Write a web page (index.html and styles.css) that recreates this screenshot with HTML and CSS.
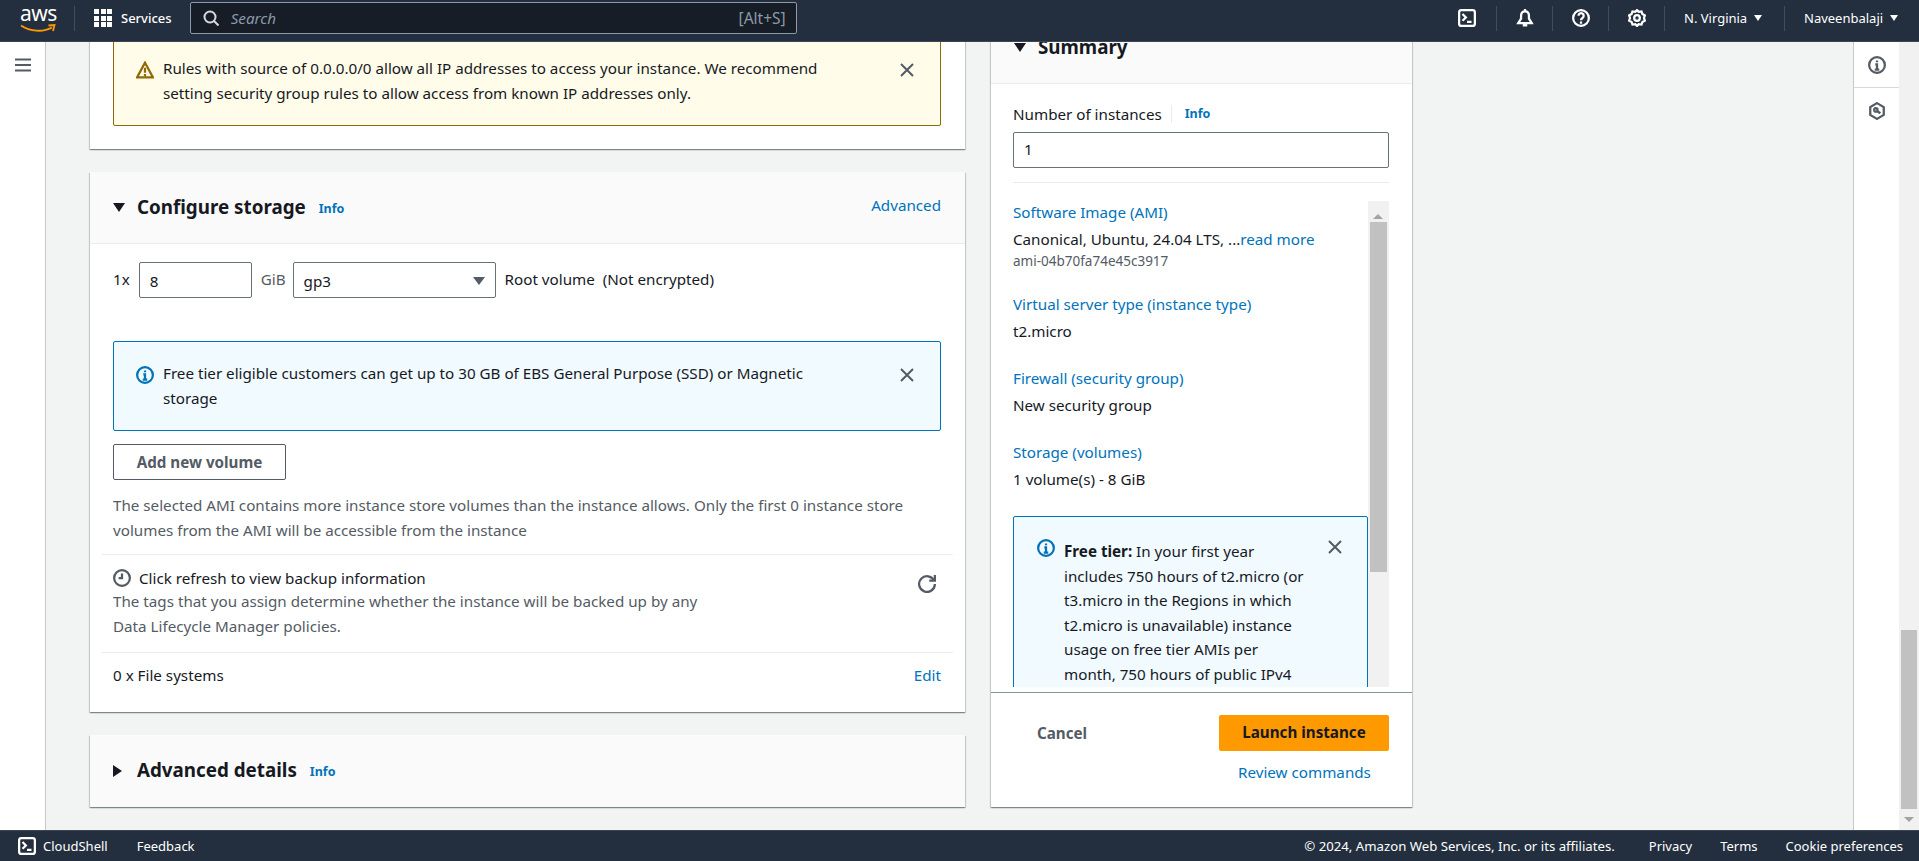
FILE: index.html
```html
<!DOCTYPE html>
<html lang="en">
<head>
  <meta charset="UTF-8" />
  <meta name="viewport" content="width=device-width, initial-scale=1.0"/>
  <title>Launch an instance | EC2</title>
  <link rel="stylesheet" href="styles.css">
</head>
<body>

  <header class="topnav">
    <a class="logo">
      <span class="logo-text">aws</span>
      <svg class="logo-smile" viewBox="0 0 36 9"><path d="M1 1.500c9 6 22 7 31 2" fill="none" stroke="#f90" stroke-width="2"/><path d="M28.500 1.500 34.500 1 33 7" fill="none" stroke="#f90" stroke-width="1.800"/></svg>
    </a>
    <span class="nav-sep nav-sep-logo"></span>
    <a class="services">
      <span class="grid-icon"><i></i><i></i><i></i><i></i><i></i><i></i><i></i><i></i><i></i></span>
      Services
    </a>
    <div class="search">
      <svg class="icon" viewBox="0 0 16 16"><circle cx="7" cy="7" r="5.500"/><path d="m11 11 4.500 4.500"/></svg>
      <span class="search-text">Search</span>
      <span class="search-key">[Alt+S]</span>
    </div>
    <div class="nav-right">
      <span class="nav-item"><svg class="icon" viewBox="0 0 16 16"><rect x="1" y="1" width="14" height="14" rx="2"/><path d="m4 4.500 3 3-3 3M8 11.500h4"/></svg></span>
      <span class="nav-item"><svg class="icon" viewBox="0 0 16 16"><path d="M8 0v2M8 2c-2.500 0-3.500 2-3.500 4v2.500L2 12.500h12l-2.500-4V6c0-2-1-4-3.500-4ZM6 14.500h4"/></svg></span>
      <span class="nav-item"><svg class="icon" viewBox="0 0 16 16"><circle cx="8" cy="8" r="7"/><path d="M5.800 6a2.300 2.300 0 1 1 3.500 2c-.9.600-1.300 1-1.300 2M8 11v2"/></svg></span>
      <span class="nav-item"><svg class="icon" viewBox="0 0 16 16"><path d="m8 1 1.500 1.500 2.500-.3.800 2.300 2.200 1.200-.8 2.300.8 2.300-2.200 1.200-.8 2.300-2.500-.3L8 15l-1.500-1.500-2.500.3-.8-2.300-2.200-1.200L1.800 8 1 5.700l2.200-1.200.8-2.300 2.500.3L8 1Z"/><circle cx="8" cy="8" r="2.500"/></svg></span>
      <span class="nav-item nav-menu nav-region">N. Virginia <b class="caret"></b></span>
      <span class="nav-item nav-menu nav-user">Naveenbalaji <b class="caret"></b></span>
    </div>
  </header>

  <div class="middle">
    <aside class="sidenav">
      <svg class="icon" viewBox="0 0 16 16"><path d="M0 2.500h16M0 8h16M0 13.500h16"/></svg>
    </aside>

    <main class="content">
      <div class="col-form">
        <section class="card card-rules">
          <div class="alert alert-warning">
            <svg class="icon alert-icon" viewBox="0 0 16 16"><path d="m8 1.500 7 13H1l7-13Z"/><path d="M8 6v4.500M8 11.500V13.500"/></svg>
            <p class="alert-text">Rules with source of 0.0.0.0/0 allow all IP addresses to access your instance. We recommend<br>setting security group rules to allow access from known IP addresses only.</p>
            <svg class="icon alert-close" viewBox="0 0 16 16"><path d="m2 2 12 12M14 2 2 14"/></svg>
          </div>
        </section>

        <section class="card">
          <div class="card-head">
            <b class="tri-down"></b>
            <h2>Configure storage</h2>
            <a class="info">Info</a>
            <a class="link head-action">Advanced</a>
          </div>
          <div class="storage-body">
            <div class="volume-row">
              <span>1x</span>
              <div class="field field-size">8</div>
              <span class="unit">GiB</span>
              <div class="field field-type">gp3<b class="select-caret"></b></div>
              <span class="root">Root volume&nbsp; (Not encrypted)</span>
            </div>
            <div class="alert alert-info">
              <svg class="icon alert-icon" viewBox="0 0 16 16"><circle cx="8" cy="8" r="7"/><path d="M8 12V7.500H6.500M6 12h4M8 4v1.500"/></svg>
              <p class="alert-text">Free tier eligible customers can get up to 30 GB of EBS General Purpose (SSD) or Magnetic<br>storage</p>
              <svg class="icon alert-close" viewBox="0 0 16 16"><path d="m2 2 12 12M14 2 2 14"/></svg>
            </div>
            <button class="btn-normal">Add new volume</button>
            <p class="note">The selected AMI contains more instance store volumes than the instance allows. Only the first 0 instance store<br>volumes from the AMI will be accessible from the instance</p>
          </div>
          <div class="row row-backup">
            <div>
              <div class="backup-title">
                <svg class="icon clock" viewBox="0 0 16 16"><circle cx="8" cy="8" r="7"/><path d="M8 4v4H5"/></svg>
                Click refresh to view backup information
              </div>
              <p class="note">The tags that you assign determine whether the instance will be backed up by any<br>Data Lifecycle Manager policies.</p>
            </div>
            <svg class="icon refresh" viewBox="0 0 16 16"><path d="M10 5h5V0"/><path d="M15 8a7 7 0 1 1-.7-3"/></svg>
          </div>
          <div class="row row-files">
            <span>0 x File systems</span>
            <a class="link">Edit</a>
          </div>
        </section>

        <section class="card card-closed">
          <div class="card-head card-head-closed">
            <b class="tri-right"></b>
            <h2>Advanced details</h2>
            <a class="info">Info</a>
          </div>
        </section>
      </div>

      <div class="col-summary">
        <section class="card">
          <div class="card-head summary-head">
            <b class="tri-down"></b>
            <h2>Summary</h2>
          </div>
          <div class="summary-top">
            <div class="count-label"><span>Number of instances</span><a class="info">Info</a></div>
            <div class="field field-count">1</div>
          </div>
          <div class="summary-scroll">
            <div class="summary-list">
              <div class="item item-first">
                <a class="link">Software Image (AMI)</a>
                <div class="value">Canonical, Ubuntu, 24.04 LTS, ...<a class="link">read more</a></div>
                <div class="ami">ami-04b70fa74e45c3917</div>
              </div>
              <div class="item">
                <a class="link">Virtual server type (instance type)</a>
                <div class="value">t2.micro</div>
              </div>
              <div class="item">
                <a class="link">Firewall (security group)</a>
                <div class="value">New security group</div>
              </div>
              <div class="item">
                <a class="link">Storage (volumes)</a>
                <div class="value">1 volume(s) - 8 GiB</div>
              </div>
              <div class="alert alert-info alert-tier">
                <svg class="icon alert-icon" viewBox="0 0 16 16"><circle cx="8" cy="8" r="7"/><path d="M8 12V7.500H6.500M6 12h4M8 4v1.500"/></svg>
                <p class="alert-text"><b>Free tier:</b> In your first year<br>includes 750 hours of t2.micro (or<br>t3.micro in the Regions in which<br>t2.micro is unavailable) instance<br>usage on free tier AMIs per<br>month, 750 hours of public IPv4</p>
                <svg class="icon alert-close" viewBox="0 0 16 16"><path d="m2 2 12 12M14 2 2 14"/></svg>
              </div>
            </div>
            <div class="sbar sbar-inner">
              <b class="sbar-up sbar-off"></b>
              <div class="thumb"></div>
              <div class="sbar-gap"></div>
              <b class="sbar-down"></b>
            </div>
          </div>
          <div class="summary-foot">
            <div class="foot-actions">
              <a class="cancel">Cancel</a>
              <button class="btn-primary">Launch instance</button>
            </div>
            <a class="link review">Review commands</a>
          </div>
        </section>
      </div>
    </main>

    <aside class="helpnav">
      <div class="help-tool">
        <svg class="icon" viewBox="0 0 16 16"><circle cx="8" cy="8" r="7"/><path d="M8 12V7.500H6.500M6 12h4M8 4v1.500"/></svg>
      </div>
      <div class="help-tool">
        <svg class="icon" viewBox="0 0 16 16"><path d="m8 1 6 3.500v7L8 15l-6-3.500v-7L8 1Z"/><circle cx="7" cy="7" r="1.500"/><path d="m8 8 3 2"/></svg>
      </div>
    </aside>

    <div class="sbar sbar-page">
      <b class="sbar-up"></b>
      <div class="sbar-gap"></div>
      <div class="thumb"></div>
      <b class="sbar-down sbar-off"></b>
    </div>
  </div>

  <footer class="footer">
    <svg class="icon" viewBox="0 0 16 16"><rect x="1" y="1" width="14" height="14" rx="2"/><path d="m4 4.500 3 3-3 3M8 11.500h4"/></svg>
    <a class="foot-shell">CloudShell</a>
    <a class="foot-feedback">Feedback</a>
    <span class="foot-copy">© 2024, Amazon Web Services, Inc. or its affiliates.</span>
    <a class="foot-link">Privacy</a>
    <a class="foot-link">Terms</a>
    <a class="foot-link">Cookie preferences</a>
  </footer>

</body>
</html>
```

FILE: styles.css
```css
* { box-sizing: border-box; }
html, body { height: 100%; }
body {
  margin: 0;
  height: 100vh;
  overflow: hidden;
  display: flex;
  flex-direction: column;
  font-family: "Noto Sans", "Open Sans", sans-serif;
  font-size: 15.2px;
  line-height: 24px;
  color: #16191f;
  background: #f2f3f3;
}
h2, p { margin: 0; }
.icon {
  width: 16px;
  height: 16px;
  fill: none;
  stroke: currentColor;
  stroke-width: 2;
  flex: none;
  display: block;
}
.link, .info { color: #0073bb; }

/* top bar */
.topnav {
  height: 42px;
  flex: none;
  display: flex;
  align-items: center;
  padding-bottom: 5px;
  background: #232f3e;
  border-bottom: 1px solid #3b4757;
  color: #fff;
  font-size: 13px;
  position: relative;
  z-index: 2;
}
.logo {
  width: 36px;
  margin-left: 20px;
  height: 30px;
  position: relative;
  display: block;
}
.logo-text {
  display: block;
  font-size: 21px;
  line-height: 20px;
  text-align: center;
  letter-spacing: -0.5px;
}
.logo-smile { display: block; width: 36px; height: 9px; margin-top: 1px; }
.nav-sep { width: 1px; height: 25px; background: #414d5c; }
.nav-sep-logo { margin-left: 18px; }
.services {
  display: flex;
  align-items: center;
  gap: 9px;
  margin-left: 19px;
  font-weight: 500;
}
.grid-icon {
  display: grid;
  grid-template-columns: repeat(3, 5px);
  grid-auto-rows: 5px;
  gap: 1.5px;
}
.grid-icon i { background: #fff; }
.search {
  width: 607px;
  height: 32px;
  margin-left: 18px;
  padding: 0 10px 0 12px;
  display: flex;
  align-items: center;
  background: #161d26;
  border: 1px solid #8d99a8;
  border-radius: 2px;
  color: #8d99a8;
}
.search .icon { color: #d5dbdb; }
.search-text { margin-left: 12px; font-style: italic; font-size: 15.2px; }
.search-key { margin-left: auto; font-size: 15.5px; }
.nav-right { margin-left: auto; display: flex; align-items: center; height: 25px; }
.nav-item {
  height: 25px;
  width: 56px;
  display: flex;
  align-items: center;
  justify-content: center;
  border-left: 1px solid #414d5c;
}
.nav-item .icon { width: 18px; height: 18px; }
.nav-item:first-child { border-left: none; width: 59px; }
.nav-menu { justify-content: flex-start; gap: 7px; padding-left: 19px; }
.nav-region { width: 120px; }
.nav-user { width: 135px; }
.caret {
  width: 0;
  height: 0;
  border: 4.5px solid transparent;
  border-top: 6px solid #fff;
  border-bottom: 0;
}

/* page body */
.middle { flex: 1; display: flex; min-height: 0; }
.sidenav {
  width: 46px;
  flex: none;
  background: #fff;
  border-right: 1px solid #c6c9ca;
  color: #545b64;
  padding: 15px 0 0 15px;
}
.content {
  flex: 1;
  display: flex;
  gap: 26px;
  padding: 0 44px;
  min-width: 0;
  overflow: hidden;
}
.col-form, .col-summary {
  display: flex;
  flex-direction: column;
  justify-content: flex-end;
  gap: 23px;
  padding-bottom: 23px;
}
.col-form { width: 875px; flex: none; }
.col-summary { width: 421px; flex: none; }
.card {
  flex: none;
  background: #fff;
  box-shadow: 0 1px 1px 0 rgba(0, 28, 36, 0.3), 1px 1px 1px 0 rgba(0, 28, 36, 0.15), -1px 1px 1px 0 rgba(0, 28, 36, 0.15);
}
.card-rules { padding: 0 24px 23px 23px; }
.card-head {
  height: 72px;
  display: flex;
  align-items: center;
  padding: 0 24px 0 23px;
  background: #fafafa;
  border-bottom: 1px solid #eaeded;
}
.card-head h2 { font-size: 18.8px; font-weight: 700; line-height: 24px; margin-top: -2px; }
.card-head .info { font-size: 12.5px; font-weight: 700; margin-left: 13px; margin-top: 2px; }
.head-action { margin-left: auto; margin-bottom: 5px; }
.tri-down {
  width: 0;
  height: 0;
  border: 6px solid transparent;
  border-top: 9px solid #16191f;
  border-bottom: 0;
  margin-right: 12px;
}
.tri-right {
  width: 0;
  height: 0;
  border: 6px solid transparent;
  border-left: 9px solid #16191f;
  border-right: 0;
  margin-right: 15px;
}
.card-head-closed { border-bottom: none; }

/* alerts */
.alert {
  display: flex;
  align-items: flex-start;
  height: 90px;
  padding: 19px 25px 0 22px;
  border: 1px solid;
  border-radius: 2px;
  line-height: 24.5px;
}
.alert-warning { background: #fffce9; border-color: #906806; }
.alert-warning .alert-icon { color: #906806; }
.alert-info { background: #f1faff; border-color: #0073bb; }
.alert-info .alert-icon { color: #0073bb; }
.alert-icon { width: 18px; height: 18px; margin-top: 5px; }
.alert-text { margin-left: 9px; }
.alert-close { margin-left: auto; margin-top: 6px; color: #545b64; width: 16px; height: 16px; }

/* storage */
.storage-body { padding: 18px 24px 12px 23px; }
.volume-row { display: flex; align-items: center; height: 36px; }
.volume-row > span { padding-bottom: 2px; }
.field {
  height: 36px;
  padding: 2px 10px 0;
  border: 1px solid #687078;
  border-radius: 2px;
  background: #fff;
  line-height: 32px;
}
.field-size { width: 113px; margin-left: 9px; }
.unit { margin-left: 9px; color: #545b64; }
.field-type { width: 203px; margin-left: 7px; position: relative; display: flex; justify-content: space-between; align-items: center; }
.select-caret {
  width: 0;
  height: 0;
  border: 6px solid transparent;
  border-top: 8px solid #545b64;
  border-bottom: 0;
}
.root { margin-left: 9px; }
.storage-body .alert { margin-top: 43px; }
.btn-normal {
  display: block;
  width: 173px;
  height: 36px;
  margin-top: 13px;
  background: #fff;
  border: 1px solid #545b64;
  border-radius: 2px;
  color: #545b64;
  font: 700 15.2px "Noto Sans", "Open Sans", sans-serif;
}
.note { color: #545b64; line-height: 24.5px; }
.btn-normal + .note { margin-top: 13px; }
.row {
  margin: 0 12px;
  padding: 0 12px 0 11px;
  display: flex;
  justify-content: space-between;
  border-top: 1px solid #eaeded;
}
.row-backup { padding-top: 11px; padding-bottom: 13px; }
.row-backup .note { margin-top: -1px; line-height: 25px; }
.backup-title { display: flex; align-items: center; gap: 8px; }
.clock { width: 18px; height: 18px; color: #545b64; }
.refresh { width: 18px; height: 18px; margin-top: 9px; margin-right: 5px; color: #545b64; }
.row-files { padding-top: 10px; padding-bottom: 25px; }

/* summary */
.summary-top { margin: 0 23px 0 22px; padding: 18px 0 14px; border-bottom: 1px solid #eaeded; }
.count-label { display: flex; align-items: center; }
.count-label .info {
  font-size: 12.5px;
  font-weight: 700;
  margin-left: 9px;
  padding-left: 13px;
  border-left: 1px solid #eaeded;
  line-height: 18px;
}
.field-count { margin-top: 6px; padding-top: 0; }
.summary-scroll {
  display: flex;
  height: 486px;
  margin: 18px 23px 5px 22px;
  overflow: hidden;
}
.summary-list { flex: 1; min-width: 0; }
.item { margin-bottom: 25px; }
.item-first { margin-bottom: 22px; }
.item > .link { display: block; line-height: 22px; }
.value { margin-top: 5px; line-height: 22px; }
.ami { color: #545b64; font-size: 13.5px; line-height: 20px; margin-top: 1px; }
.alert-tier { height: 200px; margin-top: 26px; align-items: flex-start; padding: 22px 24px 0 23px; }
.alert-tier .alert-close { margin-top: 0; }
.alert-tier .alert-icon { margin-top: 0; }
.sbar { display: flex; flex-direction: column; width: 21px; flex: none; background: #f1f1f1; }
.sbar b { display: block; height: 21px; flex: none; position: relative; }
.sbar b::after {
  content: "";
  position: absolute;
  left: 5px;
  top: 8px;
  border: 5px solid transparent;
}
.sbar-up::after { border-top: 0; border-bottom: 5px solid #505050; }
.sbar-down::after { border-bottom: 0; border-top: 5px solid #505050; }
.sbar-up.sbar-off::after { border-bottom-color: #a3a3a3; }
.sbar-down.sbar-off::after { border-top-color: #a3a3a3; }
.thumb { background: #c1c1c1; margin: 0 2px; flex: none; }
.sbar-inner .thumb { height: 350px; }
.sbar-page { width: 20px; }
.sbar-page .thumb { height: 179px; }
.sbar-page .sbar-down { height: 21px; }
.sbar-gap { flex: 1; }
.summary-foot {
  border-top: 1px solid #879596;
  padding: 22px 23px 0 46px;
  height: 115px;
}
.foot-actions { display: flex; justify-content: space-between; align-items: center; }
.cancel { color: #545b64; font-weight: 700; }
.btn-primary {
  width: 170px;
  height: 36px;
  padding: 0 0 2px;
  background: #f90;
  border: none;
  border-radius: 2px;
  color: #16191f;
  font: 700 15.2px "Noto Sans", "Open Sans", sans-serif;
}
.review { display: block; margin-top: 9px; margin-left: 201px; }

/* right rail */
.helpnav {
  width: 46px;
  flex: none;
  background: #fff;
  border-left: 1px solid #c6c9ca;
  color: #545b64;
}
.helpnav .icon { width: 18px; height: 18px; }
.help-tool {
  height: 46px;
  padding-top: 14px;
  display: flex;
  justify-content: center;
  border-bottom: 1px solid #d5dbdb;
}
.help-tool + .help-tool { border-bottom: none; }

/* footer */
.footer {
  height: 31px;
  flex: none;
  display: flex;
  align-items: center;
  padding: 0 16px 0 18px;
  background: #232f3e;
  border-top: 1px solid #3b4757;
  color: #fff;
  font-size: 13px;
  position: relative;
  z-index: 2;
}
.footer .icon { width: 18px; height: 18px; }
.foot-shell { margin-left: 7px; }
.foot-feedback { margin-left: 29px; }
.foot-copy { margin-left: auto; margin-right: 34px; font-size: 13.2px; }
.foot-link { margin-left: 28px; }
.foot-copy + .foot-link { margin-left: 0; }
```
